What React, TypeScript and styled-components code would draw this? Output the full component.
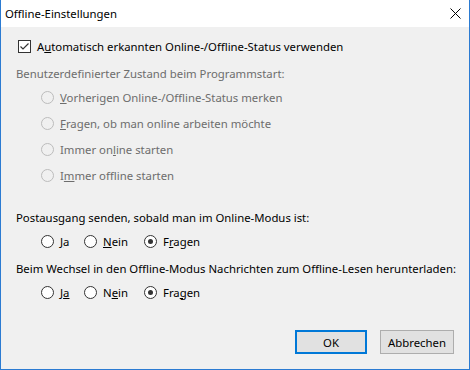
import styled, { createGlobalStyle } from "styled-components";

const GlobalStyle = createGlobalStyle`
  html, body {
    margin: 0;
    padding: 0;
    background: #f0f0f0;
  }
  * { box-sizing: border-box; }
`;

const Window = styled.div`
  width: 470px;
  height: 370px;
  display: flex;
  flex-direction: column;
  background: #f0f0f0;
  border: 1px solid #2b7bd2;
  border-top: none;
  font-family: "Noto Sans", "Open Sans", sans-serif;
  font-size: 11.35px;
  color: #000;
`;

const TitleBar = styled.div`
  height: 27px;
  flex: none;
  background: #fff;
  display: flex;
  align-items: center;
  justify-content: space-between;
  padding: 0 8px 0 4px;
`;

const Title = styled.div`
  color: #000;
`;

const Body = styled.div`
  flex: 1;
  display: flex;
  flex-direction: column;
  padding: 6px 15px 0 15px;
`;

const Row = styled.div<{ $h?: number; $mt?: number; $indent?: number }>`
  height: ${(p) => p.$h ?? 26}px;
  margin-top: ${(p) => p.$mt ?? 0}px;
  padding-left: ${(p) => p.$indent ?? 0}px;
  display: flex;
  align-items: center;
  white-space: nowrap;
`;

const Label = styled.span<{ $disabled?: boolean }>`
  color: ${(p) => (p.$disabled ? "#6d6d6d" : "#000")};
`;

const Option = styled.div<{ $w?: number }>`
  display: flex;
  align-items: center;
  gap: 6px;
  width: ${(p) => (p.$w ? `${p.$w}px` : "auto")};
  flex: none;
`;

const Box = styled.span`
  width: 13px;
  height: 13px;
  border: 1px solid #333;
  background: #fff;
  display: inline-flex;
  align-items: center;
  justify-content: center;
  flex: none;
`;

const Circle = styled.span<{ $disabled?: boolean }>`
  width: 13px;
  height: 13px;
  border-radius: 50%;
  border: 1px solid ${(p) => (p.$disabled ? "#bcbcbc" : "#333")};
  background: ${(p) => (p.$disabled ? "#f0f0f0" : "#fff")};
  display: inline-flex;
  align-items: center;
  justify-content: center;
  flex: none;
`;

const Dot = styled.span`
  width: 5px;
  height: 5px;
  border-radius: 50%;
  background: #333;
`;

const Footer = styled.div`
  display: flex;
  justify-content: flex-end;
  gap: 13px;
  padding: 0 15px 15px 0;
`;

const Button = styled.button<{ $default?: boolean }>`
  height: 24px;
  width: ${(p) => (p.$default ? 72 : 74)}px;
  background: #e1e1e1;
  border: ${(p) => (p.$default ? "2px solid #0078d7" : "1px solid #adadad")};
  font-family: inherit;
  font-size: inherit;
  color: #000;
  padding: 0;
`;

function Key({ children }: { children: string }) {
  return <u>{children}</u>;
}

function Radio({
  checked,
  disabled,
  width,
  children,
}: {
  checked?: boolean;
  disabled?: boolean;
  width?: number;
  children: React.ReactNode;
}) {
  return (
    <Option $w={width}>
      <Circle $disabled={disabled}>{checked && <Dot />}</Circle>
      <Label $disabled={disabled}>{children}</Label>
    </Option>
  );
}

export default function App() {
  return (
    <>
      <GlobalStyle />
      <Window>
        <TitleBar>
          <Title>Offline-Einstellungen</Title>
          <svg width="11" height="11" viewBox="0 0 11 11">
            <path d="M0.5 0.5 L10.5 10.5 M10.5 0.5 L0.5 10.5" stroke="#000" strokeWidth="1" />
          </svg>
        </TitleBar>
        <Body>
          <Row $indent={2}>
            <Option>
              <Box>
                <svg width="11" height="11" viewBox="0 0 11 11">
                  <path d="M1.5 5.5 L4 8 L9.5 2.5" fill="none" stroke="#333" strokeWidth="1.2" />
                </svg>
              </Box>
              <Label>
                A<Key>u</Key>tomatisch erkannten Online-/Offline-Status verwenden
              </Label>
            </Option>
          </Row>
          <Row $h={23} $mt={3}>
            <Label $disabled>Benutzerdefinierter Zustand beim Programmstart:</Label>
          </Row>
          <Row $indent={25} $mt={-1}>
            <Radio disabled>
              <Key>V</Key>orherigen Online-/Offline-Status merken
            </Radio>
          </Row>
          <Row $indent={25}>
            <Radio disabled>
              <Key>F</Key>ragen, ob man online arbeiten möchte
            </Radio>
          </Row>
          <Row $indent={25}>
            <Radio disabled>
              Immer on<Key>l</Key>ine starten
            </Radio>
          </Row>
          <Row $indent={25}>
            <Radio disabled>
              I<Key>m</Key>mer offline starten
            </Radio>
          </Row>
          <Row $h={24} $mt={17}>
            <Label>Postausgang senden, sobald man im Online-Modus ist:</Label>
          </Row>
          <Row $h={24} $indent={25}>
            <Radio width={43}>
              <Key>J</Key>a
            </Radio>
            <Radio width={60}>
              <Key>N</Key>ein
            </Radio>
            <Radio checked>
              F<Key>r</Key>agen
            </Radio>
          </Row>
          <Row $h={24} $mt={3}>
            <Label>Beim Wechsel in den Offline-Modus Nachrichten zum Offline-Lesen herunterladen:</Label>
          </Row>
          <Row $h={24} $indent={25}>
            <Radio width={43}>
              J<Key>a</Key>
            </Radio>
            <Radio width={60}>
              N<Key>e</Key>in
            </Radio>
            <Radio checked>
              Fra<Key>g</Key>en
            </Radio>
          </Row>
        </Body>
        <Footer>
          <Button $default>OK</Button>
          <Button>Abbrechen</Button>
        </Footer>
      </Window>
    </>
  );
}
